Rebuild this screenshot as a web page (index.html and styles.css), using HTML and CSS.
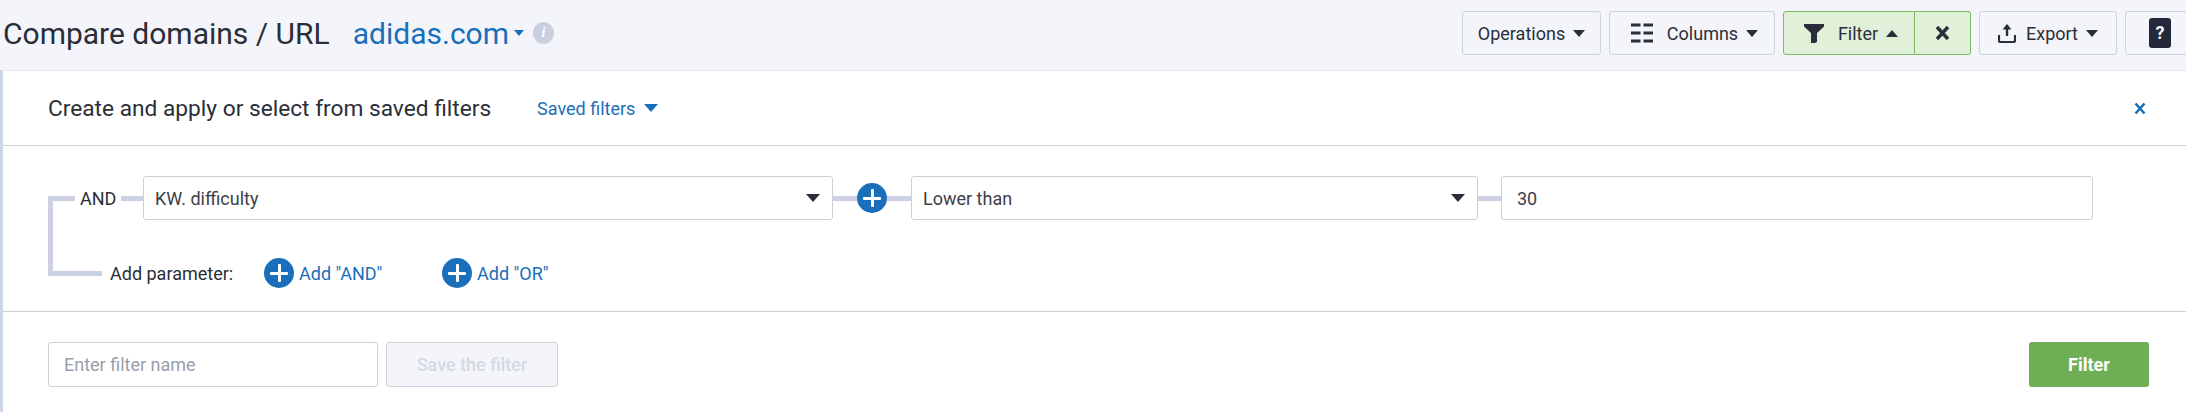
FILE: index.html
```html
<!DOCTYPE html>
<html lang="en">
<head>
    <meta charset="UTF-8">
    <title>Compare domains / URL</title>
    <link rel="stylesheet" href="styles.css">
</head>
<body>
    <header class="topbar">
        <h1 class="page-title">Compare domains / URL</h1>
        <a class="domain-pick">adidas.com<span class="caret caret-small"></span></a>
        <span class="info-dot">i</span>

        <div class="toolbar">
            <button class="tool-btn btn-operations">Operations<span class="caret"></span></button>
            <button class="tool-btn btn-columns">
                <svg class="tool-icon" width="22" height="20" viewBox="0 0 22 20"><path d="M0 2h9.5M12.5 2H22M0 10h9.5M12.5 10H22M0 18h9.5M12.5 18H22" stroke="#2a2e38" stroke-width="3"/></svg>
                Columns<span class="caret"></span>
            </button>
            <div class="filter-group">
                <button class="tool-btn btn-filter">
                    <svg class="tool-icon" width="20" height="19" viewBox="0 0 20 19"><path d="M0 0h20v2.5l-7 6.5v9l-2 1H7V9L0 2.5z" fill="#2a2e38"/></svg>
                    Filter<span class="caret caret-up"></span>
                </button>
                <button class="tool-btn btn-filter-off">
                    <svg width="15" height="16" viewBox="0 0 15 16"><path d="M2 2l11 12M13 2L2 14" stroke="#2a2e38" stroke-width="3.4"/></svg>
                </button>
            </div>
            <button class="tool-btn btn-export">
                <svg class="tool-icon" width="18" height="20" viewBox="0 0 18 20"><path d="M9 13V2" stroke="#2a2e38" stroke-width="2.4"/><path d="M4.5 6.5L9 1l4.5 5.5z" fill="#2a2e38"/><path d="M1 12v5.5a1.5 1.5 0 0 0 1.5 1.5h13a1.5 1.5 0 0 0 1.5-1.5V12" fill="none" stroke="#2a2e38" stroke-width="2.2"/></svg>
                Export<span class="caret"></span>
            </button>
            <button class="tool-btn btn-help"><span class="help-mark">?</span></button>
        </div>
    </header>

    <section class="filter-panel">
        <div class="panel-head">
            <h2 class="panel-title">Create and apply or select from saved filters</h2>
            <a class="saved-link">Saved filters<span class="caret caret-blue"></span></a>
            <svg class="panel-close" width="12" height="13" viewBox="0 0 12 13"><path d="M1.5 1.5l9 10M10.5 1.5l-9 10" stroke="#1a6fba" stroke-width="2.6"/></svg>
        </div>

        <div class="rules">
            <div class="rule-row">
                <span class="link link-start"></span>
                <span class="and-label">AND</span>
                <span class="link link-and"></span>
                <div class="field field-param">KW. difficulty<span class="caret caret-field"></span></div>
                <span class="link link-plus"></span>
                <span class="plus-dot"></span>
                <span class="link link-plus"></span>
                <div class="field field-cond">Lower than<span class="caret caret-field"></span></div>
                <span class="link link-value"></span>
                <div class="field field-value">30</div>
            </div>
            <div class="add-row">
                <span class="link link-add"></span>
                <span class="add-label">Add parameter:</span>
                <a class="add-link add-and"><span class="plus-dot"></span>Add "AND"</a>
                <a class="add-link"><span class="plus-dot"></span>Add "OR"</a>
            </div>
        </div>

        <div class="panel-foot">
            <input class="name-input" type="text" placeholder="Enter filter name">
            <button class="save-btn">Save the filter</button>
            <button class="apply-btn">Filter</button>
        </div>
    </section>
</body>
</html>
```

FILE: styles.css
```css
* {
    margin: 0;
    padding: 0;
    box-sizing: border-box;
}

body {
    font-family: 'Roboto', sans-serif;
    background: #fff;
    color: #2a2e38;
    width: 2186px;
    height: 412px;
    overflow: hidden;
}

/* Top bar */
.topbar {
    display: flex;
    align-items: center;
    height: 70px;
    padding: 0 0 4px 3px;
    background: #f3f5fa;
}

.page-title {
    font-size: 30px;
    font-weight: 400;
}

.domain-pick {
    display: flex;
    align-items: center;
    margin-left: 23px;
    font-size: 30px;
    color: #1a6fba;
}

.info-dot {
    width: 21px;
    height: 22px;
    margin-left: 9px;
    border-radius: 50%;
    background: #c9d0e0;
    color: #fff;
    font: italic 700 14px/22px 'Liberation Serif', serif;
    text-align: center;
}

.toolbar {
    display: flex;
    flex: none;
    margin-left: auto;
    margin-right: -30px;
    gap: 8px;
}

.tool-btn {
    display: flex;
    flex: none;
    align-items: center;
    justify-content: center;
    height: 44px;
    border: 1px solid #cfd3dd;
    border-radius: 3px;
    background: #f3f5fa;
    font-family: inherit;
    font-size: 18px;
    color: #2a2e38;
}

.tool-icon {
    margin-right: 14px;
}

.btn-operations { width: 139px; }
.btn-columns { width: 166px; padding-left: 5px; }
.btn-export { width: 138px; }
.btn-export .tool-icon { margin-right: 10px; }

.btn-help {
    width: 91px;
    justify-content: flex-start;
    padding-left: 23px;
}

.filter-group {
    display: flex;
}

.btn-filter {
    width: 132px;
    padding-left: 4px;
    background: #e1f0d9;
    border-color: #7dbb63;
    border-radius: 3px 0 0 3px;
}

.btn-filter-off {
    width: 56px;
    background: #e1f0d9;
    border-color: #7dbb63;
    border-left: 0;
    border-radius: 0 3px 3px 0;
}

.help-mark {
    flex: none;
    width: 22px;
    height: 30px;
    border-radius: 3px;
    background: #23283a;
    color: #fff;
    font-size: 18px;
    font-weight: 700;
    line-height: 30px;
    text-align: center;
}

.caret {
    display: inline-block;
    width: 0;
    height: 0;
    margin-left: 8px;
    border-left: 6px solid transparent;
    border-right: 6px solid transparent;
    border-top: 7px solid #2a2e38;
}

.caret-up {
    border-top: 0;
    border-bottom: 7px solid #2a2e38;
}

.caret-small {
    margin-left: 5px;
    border-left-width: 5px;
    border-right-width: 5px;
    border-top: 6px solid #1a6fba;
}

.caret-blue {
    margin-left: 9px;
    border-left-width: 7px;
    border-right-width: 7px;
    border-top: 8px solid #1a6fba;
}

.caret-field {
    margin-left: auto;
    border-left-width: 7px;
    border-right-width: 7px;
    border-top-width: 8px;
}

/* Filter panel */
.filter-panel {
    height: 342px;
    border-top: 1px solid #e6e9f1;
    border-left: 3px solid #cdd5e6;
}

.panel-head {
    display: flex;
    align-items: center;
    height: 75px;
    padding: 0 40px 0 45px;
    border-bottom: 1px solid #cdd0d8;
}

.panel-title {
    font-size: 22.7px;
    font-weight: 400;
}

.saved-link {
    display: flex;
    align-items: center;
    margin-left: 46px;
    font-size: 18px;
    color: #1a6fba;
}

.panel-close {
    margin-left: auto;
}

.rules {
    position: relative;
    height: 166px;
    padding: 30px 0 0 45px;
    border-bottom: 1px solid #cdd0d8;
}

/* Elbow joining AND to the add row */
.rules::before {
    content: "";
    position: absolute;
    left: 45px;
    top: 50px;
    width: 5px;
    height: 80px;
    background: #cdd0e2;
}

.rule-row,
.add-row {
    display: flex;
    align-items: center;
}

.rule-row {
    height: 44px;
}

.link {
    flex: none;
    height: 5px;
    background: #cdd0e2;
}

.link-start { width: 27px; }
.link-and { width: 22px; }
.link-plus { width: 24px; }
.link-value { width: 23px; }
.link-add { width: 54px; }

.and-label {
    width: 46px;
    padding-left: 5px;
    font-size: 18px;
}

.field {
    display: flex;
    align-items: center;
    height: 44px;
    padding: 0 12px 0 11px;
    border: 1px solid #cdd0d8;
    border-radius: 3px;
    background: #fff;
    font-size: 18px;
    color: #3c4048;
}

.field-param { width: 690px; }
.field-cond { width: 567px; }
.field-value { width: 592px; padding-left: 15px; }

.plus-dot {
    position: relative;
    flex: none;
    width: 30px;
    height: 30px;
    border-radius: 50%;
    background: #1a6fba;
}

.plus-dot::before,
.plus-dot::after {
    content: "";
    position: absolute;
    background: #fff;
    border-radius: 1px;
}

.plus-dot::before {
    left: 6px;
    right: 6px;
    top: 13.5px;
    height: 3px;
}

.plus-dot::after {
    top: 6px;
    bottom: 6px;
    left: 13.5px;
    width: 3px;
}

.add-row {
    margin-top: 38px;
}

.add-label {
    width: 162px;
    padding-left: 8px;
    font-size: 18px;
}

.add-link {
    display: flex;
    align-items: center;
    gap: 5px;
    font-size: 18px;
    color: #1a6fba;
}

.add-and {
    width: 178px;
}

.panel-foot {
    display: flex;
    align-items: flex-start;
    padding: 30px 37px 0 45px;
}

.name-input {
    width: 330px;
    height: 45px;
    padding: 0 15px;
    border: 1px solid #cdd0d8;
    border-radius: 3px;
    font-family: inherit;
    font-size: 18px;
    color: #2a2e38;
}

.name-input::placeholder {
    color: #9a9eaa;
}

.save-btn {
    width: 172px;
    height: 45px;
    margin-left: 8px;
    border: 1px solid #cdd0d8;
    border-radius: 3px;
    background: #f3f5fa;
    font-family: inherit;
    font-size: 18px;
    font-weight: 500;
    color: #d5d9e4;
}

.apply-btn {
    width: 120px;
    height: 45px;
    margin-left: auto;
    border: none;
    border-radius: 3px;
    background: #6fae55;
    font-family: inherit;
    font-size: 18px;
    font-weight: 700;
    color: #fff;
}
```
